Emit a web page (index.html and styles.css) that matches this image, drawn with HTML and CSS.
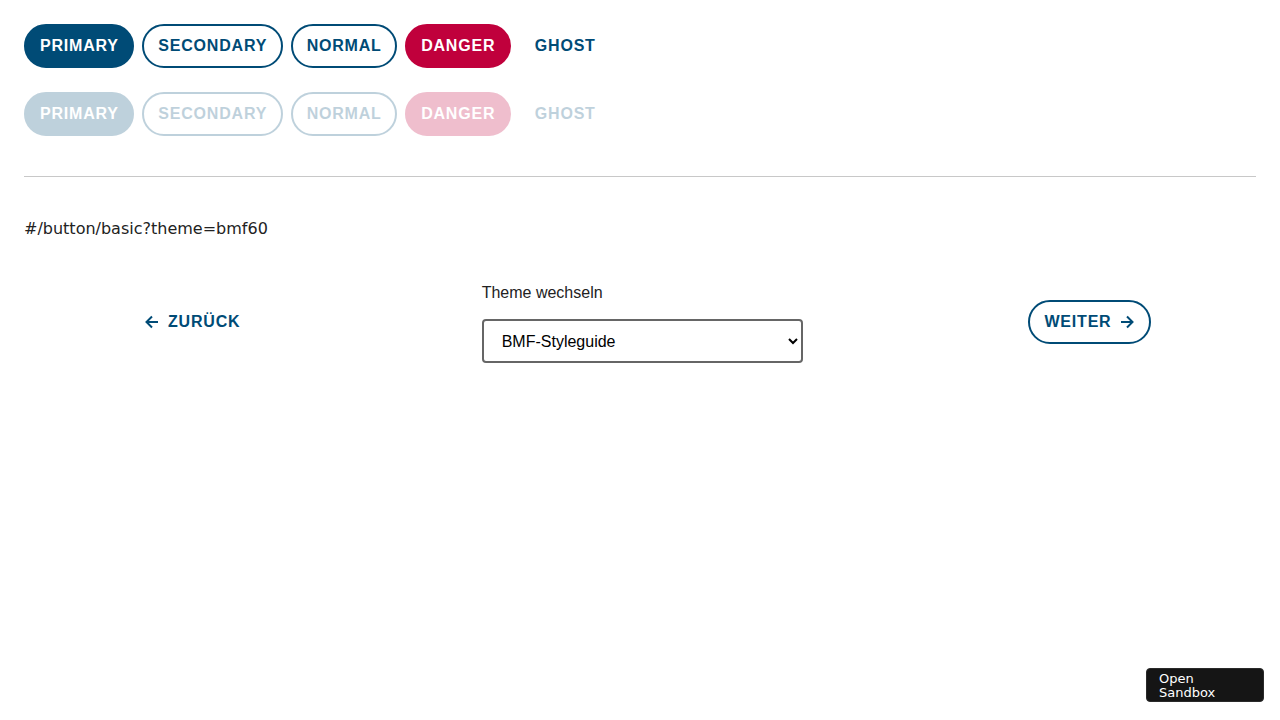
FILE: index.html
```html
<!DOCTYPE html>
<html lang="de">
<head>
<meta charset="utf-8">
<title>Button basic</title>
<link rel="stylesheet" href="styles.css">
</head>
<body>
<main class="page">
  <div class="btn-row">
    <button class="btn btn-primary">Primary</button>
    <button class="btn btn-secondary">Secondary</button>
    <button class="btn btn-normal">Normal</button>
    <button class="btn btn-danger">Danger</button>
    <button class="btn btn-ghost">Ghost</button>
  </div>
  <div class="btn-row">
    <button class="btn btn-primary" disabled>Primary</button>
    <button class="btn btn-secondary" disabled>Secondary</button>
    <button class="btn btn-normal" disabled>Normal</button>
    <button class="btn btn-danger" disabled>Danger</button>
    <button class="btn btn-ghost" disabled>Ghost</button>
  </div>
  <hr class="divider">
  <p class="route">#/button/basic?theme=bmf60</p>
  <div class="nav">
    <button class="btn btn-ghost btn-icon">
      <svg class="icon" viewBox="0 0 16 16" width="16" height="16"><path d="M14 8H2.5M8 2.5L2.5 8L8 13.5" fill="none" stroke="currentColor" stroke-width="2"/></svg>
      <span>Zurück</span>
    </button>
    <div class="theme">
      <label class="theme-label" for="theme">Theme wechseln</label>
      <select id="theme" class="theme-select">
        <option>BMF-Styleguide</option>
      </select>
    </div>
    <button class="btn btn-normal btn-icon">
      <span>Weiter</span>
      <svg class="icon" viewBox="0 0 16 16" width="16" height="16"><path d="M2 8H13.5M8 2.5L13.5 8L8 13.5" fill="none" stroke="currentColor" stroke-width="2"/></svg>
    </button>
  </div>
</main>
<a class="sandbox">Open Sandbox</a>
</body>
</html>
```
FILE: styles.css
```css
html, body {
  margin: 0;
  padding: 0;
  background: #fff;
}
body {
  font-family: "DejaVu Sans", sans-serif;
  color: #222;
}
.page {
  padding: 24px;
}
.btn-row {
  display: flex;
  gap: 8px;
  margin-bottom: 24px;
}
.btn {
  box-sizing: border-box;
  height: 44px;
  padding: 0 13.5px 0 14px;
  border: 2px solid transparent;
  border-radius: 22px;
  font-family: "Liberation Sans", Arial, sans-serif;
  font-weight: 700;
  font-size: 16px;
  letter-spacing: 0.8px;
  text-transform: uppercase;
  background: transparent;
  color: #004b76;
  cursor: pointer;
  display: inline-flex;
  align-items: center;
  gap: 8px;
}
.btn:disabled {
  opacity: 0.25;
  cursor: default;
}
.btn-primary {
  background: #004b76;
  border-color: #004b76;
  color: #fff;
}
.btn-secondary,
.btn-normal {
  background: #fff;
  border-color: #004b76;
  color: #004b76;
}
.btn-danger {
  background: #c0003c;
  border-color: #c0003c;
  color: #fff;
}
.divider {
  border: 0;
  border-top: 1px solid #c8c8c8;
  margin: 40px 0 0;
}
.route {
  margin: 42px 0 0;
  font-size: 16px;
  line-height: 20px;
  color: #222;
}
.nav {
  display: flex;
  align-items: center;
  justify-content: space-between;
  padding: 0 105px 0 104px;
  margin-top: 41px;
}
.icon {
  display: block;
}
.theme {
  display: flex;
  flex-direction: column;
  gap: 17px;
  margin-top: 4px;
}
.theme-label {
  font-family: "Liberation Sans", Arial, sans-serif;
  font-size: 16px;
  line-height: 18px;
  color: #222;
}
.theme-select {
  box-sizing: border-box;
  width: 321px;
  height: 44px;
  padding: 0 14px;
  border: 2px solid #666;
  border-radius: 4px;
  background: #fff;
  font-family: "Liberation Sans", Arial, sans-serif;
  font-size: 16px;
  color: #000;
}
.sandbox {
  position: fixed;
  right: 16px;
  bottom: 18px;
  box-sizing: border-box;
  width: 118px;
  height: 34px;
  padding: 3px 12px;
  background: #151515;
  border: 1px solid #2a2a2a;
  border-radius: 4px;
  color: #fff;
  font-family: "DejaVu Sans", sans-serif;
  font-size: 13px;
  line-height: 14px;
}
```
